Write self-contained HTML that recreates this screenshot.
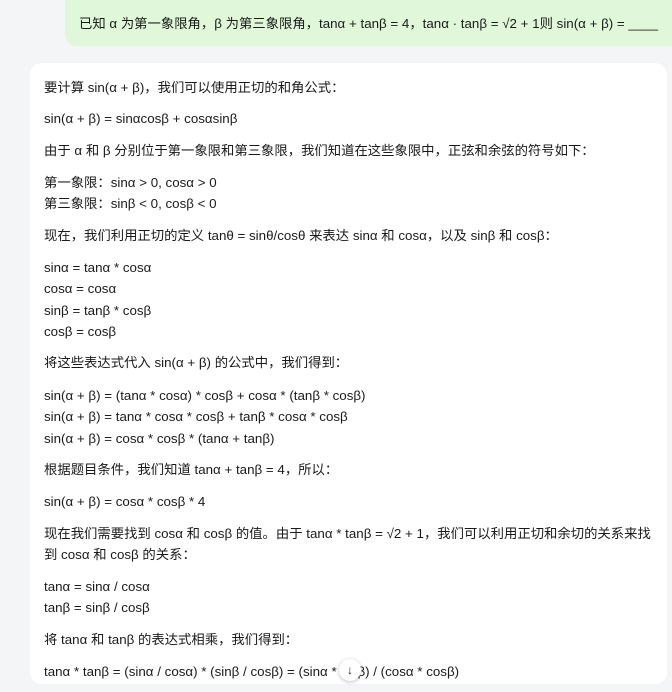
<!DOCTYPE html>
<html><head><meta charset="utf-8"><style>
body{margin:0;width:672px;height:692px;background:#f4f5f7;font-family:"Liberation Sans","Noto Sans CJK SC",sans-serif;font-size:13.35px;color:#1a1a1a;position:relative;overflow:hidden}
.u{position:absolute;left:65px;top:-10px;width:620px;height:56px;background:#e0f8d9;border-radius:12px}
.c{position:absolute;left:30px;top:63px;width:637px;height:621px;background:#fff;border-radius:12px}
.l{position:absolute;left:44px;white-space:nowrap;line-height:16px}
.btn{position:absolute;left:339px;top:659px;width:22px;height:22px;border-radius:50%;background:#fff;box-shadow:0 1px 4px rgba(0,0,0,.25);font-size:12px;text-align:center;line-height:22px}
</style></head><body>
<div class="u"></div>
<div class="l" style="left:79px;top:16px">已知 α 为第一象限角，β 为第三象限角，tanα + tanβ = 4，tanα · tanβ = √2 + 1则 sin(α + β) = ____</div>
<div class="c"></div>
<div class="l" style="top:80px">要计算 sin(α + β)，我们可以使用正切的和角公式：</div>
<div class="l" style="top:111px">sin(α + β) = sinαcosβ + cosαsinβ</div>
<div class="l" style="top:143px">由于 α 和 β 分别位于第一象限和第三象限，我们知道在这些象限中，正弦和余弦的符号如下：</div>
<div class="l" style="top:175px">第一象限：sinα &gt; 0, cosα &gt; 0</div>
<div class="l" style="top:196px">第三象限：sinβ &lt; 0, cosβ &lt; 0</div>
<div class="l" style="top:228px">现在，我们利用正切的定义 tanθ = sinθ/cosθ 来表达 sinα 和 cosα，以及 sinβ 和 cosβ：</div>
<div class="l" style="top:260px">sinα = tanα * cosα</div>
<div class="l" style="top:281px">cosα = cosα</div>
<div class="l" style="top:303px">sinβ = tanβ * cosβ</div>
<div class="l" style="top:324px">cosβ = cosβ</div>
<div class="l" style="top:355px">将这些表达式代入 sin(α + β) 的公式中，我们得到：</div>
<div class="l" style="top:388px">sin(α + β) = (tanα * cosα) * cosβ + cosα * (tanβ * cosβ)</div>
<div class="l" style="top:409px">sin(α + β) = tanα * cosα * cosβ + tanβ * cosα * cosβ</div>
<div class="l" style="top:431px">sin(α + β) = cosα * cosβ * (tanα + tanβ)</div>
<div class="l" style="top:462px">根据题目条件，我们知道 tanα + tanβ = 4，所以：</div>
<div class="l" style="top:494px">sin(α + β) = cosα * cosβ * 4</div>
<div class="l" style="top:526px">现在我们需要找到 cosα 和 cosβ 的值。由于 tanα * tanβ = √2 + 1，我们可以利用正切和余切的关系来找</div>
<div class="l" style="top:547px">到 cosα 和 cosβ 的关系：</div>
<div class="l" style="top:579px">tanα = sinα / cosα</div>
<div class="l" style="top:600px">tanβ = sinβ / cosβ</div>
<div class="l" style="top:632px">将 tanα 和 tanβ 的表达式相乘，我们得到：</div>
<div class="l" style="top:664px">tanα * tanβ = (sinα / cosα) * (sinβ / cosβ) = (sinα * sinβ) / (cosα * cosβ)</div>
<div class="btn">↓</div>
</body></html>
